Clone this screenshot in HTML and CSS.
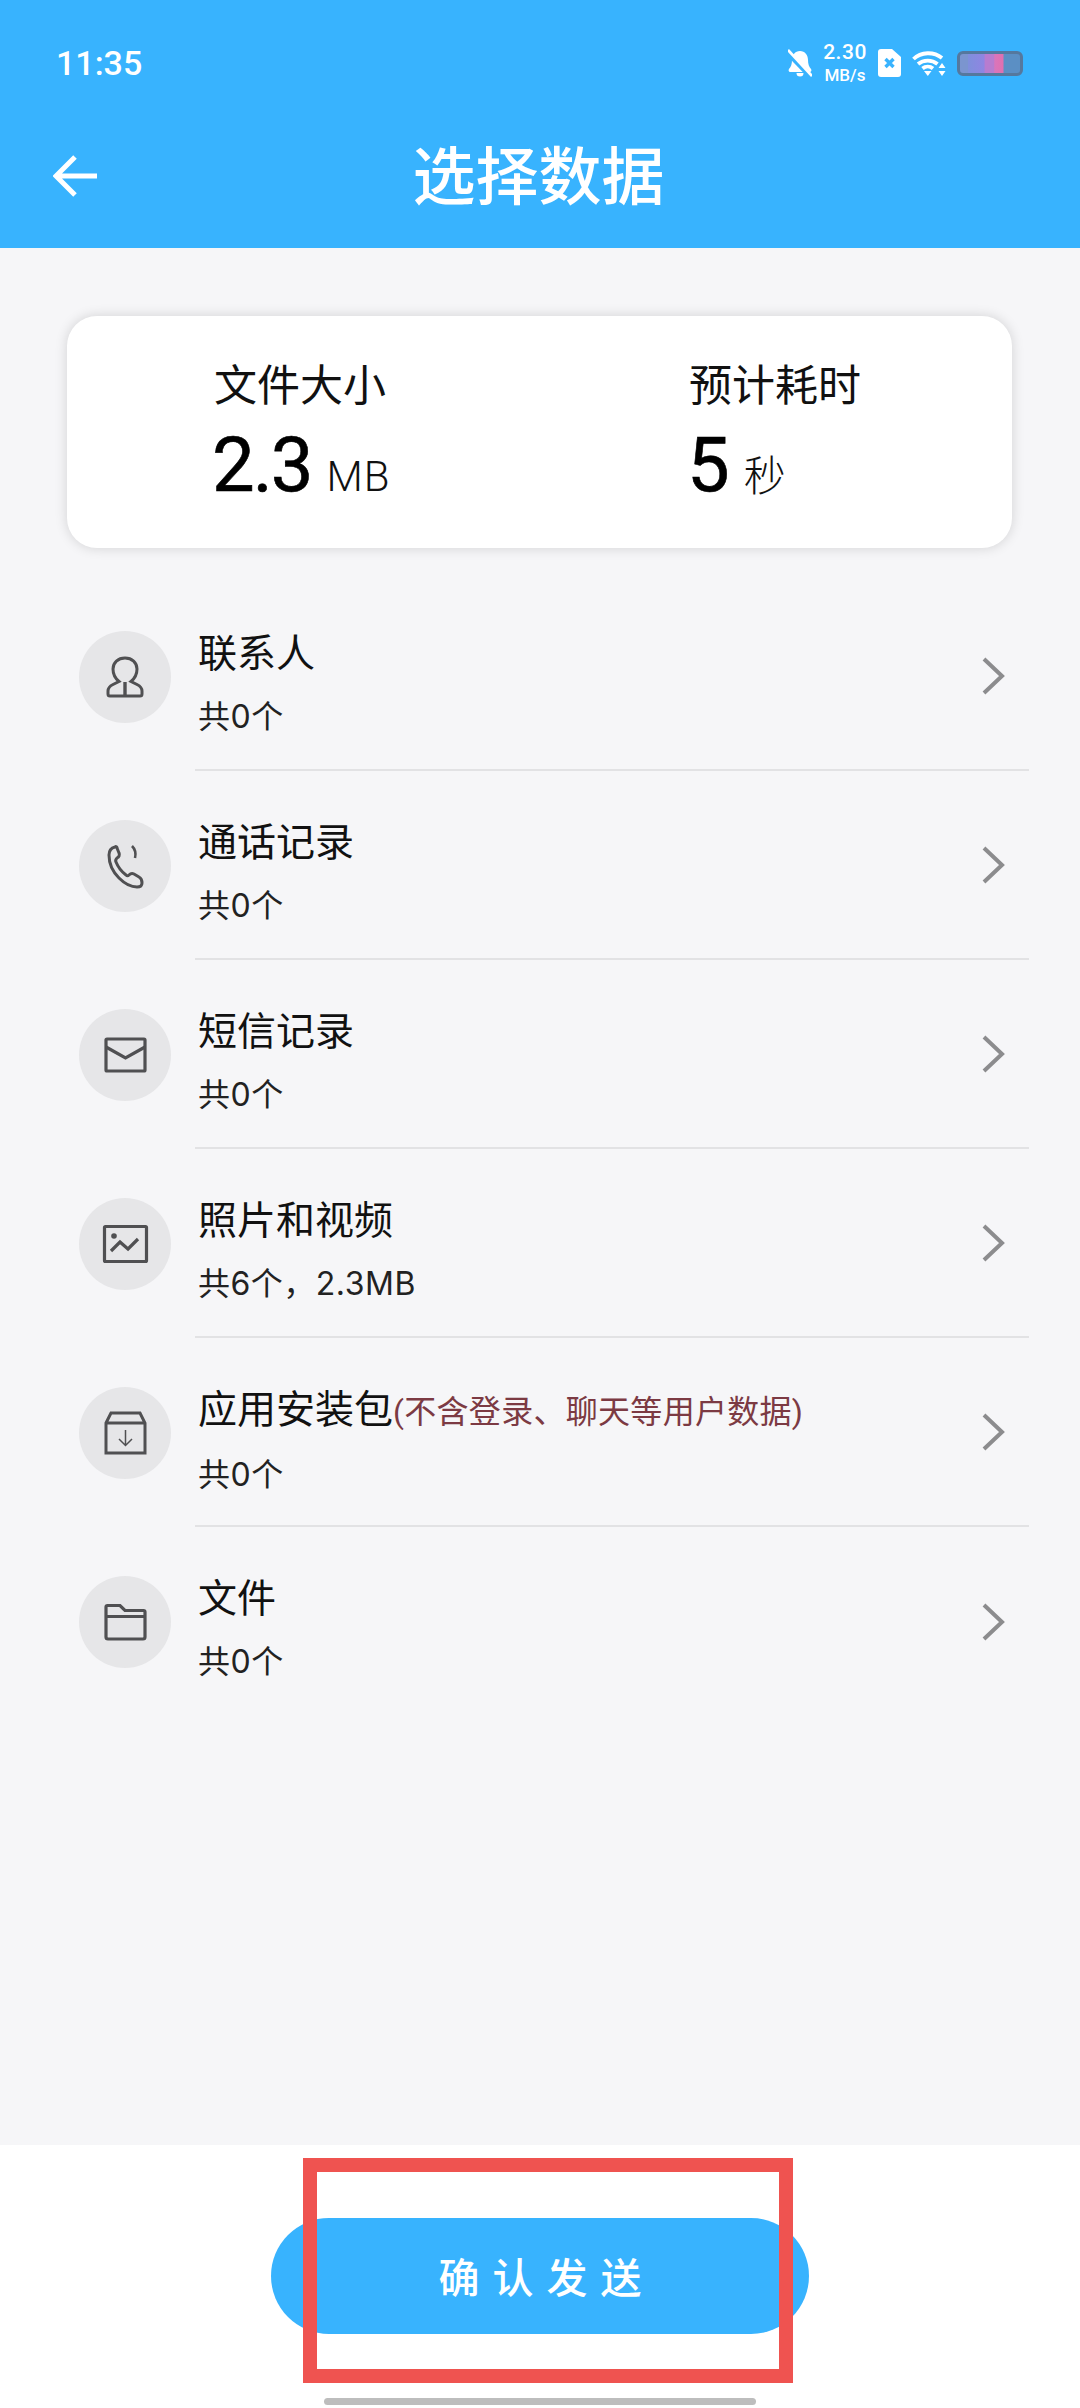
FILE: index.html
```html
<!DOCTYPE html>
<html lang="zh-CN">
<head>
    <meta charset="UTF-8">
    <meta name="viewport" content="width=device-width, initial-scale=1.0">
    <title>选择数据</title>
    <link rel="stylesheet" href="styles.css">
</head>
<body>
    <div class="page">
        <div class="header">
            <div class="status">
                <span class="time">11:35</span>
                <div class="status-icons">
                    <svg class="ic-bell" viewBox="0 0 24 28"><path d="M12 2C7 2 4 6 4 11c0 4-1 7-3 9-1 1 0 3 1 3h20c1 0 2-2 1-3-2-2-3-5-3-9 0-5-3-9-8-9z" fill="#fff"/><path d="M8.500 24h7a3.500 3.500 0 0 1-7 0z" fill="#fff"/><path d="M-1 3l24 25" stroke="#38b3fe" stroke-width="5"/><path d="M0 1l24 26" stroke="#fff" stroke-width="2.600"/></svg>
                    <div class="speed"><span>2.30</span><span class="speed-unit">MB/s</span></div>
                    <svg class="ic-sim" viewBox="0 0 23 28"><path d="M3 0h11l9 8v17a3 3 0 0 1-3 3H3a3 3 0 0 1-3-3V3a3 3 0 0 1 3-3z" fill="#fff"/><path d="M7.500 10l8 8M15.500 10l-8 8" stroke="#38b3fe" stroke-width="3.400"/></svg>
                    <svg class="ic-wifi" viewBox="0 0 34 26"><path d="M1.500 9C9 1.500 22 1.500 30 8M6 14c5.500-4.500 14-4.500 19.500 0M10.500 18.500c3-2.500 7.500-2.500 10.500 0" fill="none" stroke="#fff" stroke-width="3.800"/><path d="M12 21h7.500l-3.700 5z" fill="#fff"/><path d="M30 13l3.500 5h-7zM30 26l3.500-5h-7z" fill="#fff"/></svg>
                    <div class="battery"></div>
                </div>
            </div>
            <div class="nav">
                <svg class="ic-back" viewBox="0 0 44 42"><path d="M22 2L3 21l19 19M3 21h41" fill="none" stroke="#fff" stroke-width="5"/></svg>
                <div class="nav-title">选择数据</div>
            </div>
        </div>

        <div class="main">
            <div class="card">
                <div class="stat">
                    <div class="stat-label">文件大小</div>
                    <div class="stat-value">2.3<span class="stat-unit stat-unit-en">MB</span></div>
                </div>
                <div class="stat">
                    <div class="stat-label">预计耗时</div>
                    <div class="stat-value">5<span class="stat-unit">秒</span></div>
                </div>
            </div>

            <ul class="list">
                <li class="row">
                    <div class="circle">
                        <svg viewBox="0 0 92 92"><path d="M31 65h30a2 2 0 0 0 2-2v-3c0-3-2-5-5-6.500l-6-3c3-2.500 6-7 6-12.500 0-6.500-5-11-12-11s-12 4.500-12 11c0 5.500 3 10 6 12.500l-6 3c-3 1.500-5 3.500-5 6.500v3a2 2 0 0 0 2 2z" fill="none" stroke="#505052" stroke-width="3"/><path d="M46 51v13" stroke="#505052" stroke-width="3.400"/></svg>
                    </div>
                    <div class="row-body">
                        <div class="row-text">
                            <div class="row-title">联系人</div>
                            <div class="row-sub">共0个</div>
                        </div>
                        <svg class="chevron" viewBox="0 0 24 38"><path d="M3 2l18 17L3 36" fill="none" stroke="#8c8c8e" stroke-width="4"/></svg>
                    </div>
                </li>
                <li class="row">
                    <div class="circle">
                        <svg viewBox="0 0 92 92"><path d="M36 27c-4 1-6 4-6 8 0 8 4 17 10 23 5 5 12 9 18 9 3 0 5-1 5-4 0-2-1-5-3-6l-5-3c-2-1-3-1-5 1-1 1-2 1-3 0-4-3-8-8-10-13-1-2 0-3 1-4 2-1 3-3 2-5l-2-5c0-1-1-2-2-1z" fill="none" stroke="#505052" stroke-width="3"/><path d="M53 26c3 3 4 8 3 12" fill="none" stroke="#505052" stroke-width="2.600"/></svg>
                    </div>
                    <div class="row-body">
                        <div class="row-text">
                            <div class="row-title">通话记录</div>
                            <div class="row-sub">共0个</div>
                        </div>
                        <svg class="chevron" viewBox="0 0 24 38"><path d="M3 2l18 17L3 36" fill="none" stroke="#8c8c8e" stroke-width="4"/></svg>
                    </div>
                </li>
                <li class="row">
                    <div class="circle">
                        <svg viewBox="0 0 92 92"><rect x="27" y="30" width="39" height="32" rx="1" fill="none" stroke="#505052" stroke-width="3.200"/><path d="M27 38l19.500 11L66 38" fill="none" stroke="#505052" stroke-width="3.200"/></svg>
                    </div>
                    <div class="row-body">
                        <div class="row-text">
                            <div class="row-title">短信记录</div>
                            <div class="row-sub">共0个</div>
                        </div>
                        <svg class="chevron" viewBox="0 0 24 38"><path d="M3 2l18 17L3 36" fill="none" stroke="#8c8c8e" stroke-width="4"/></svg>
                    </div>
                </li>
                <li class="row">
                    <div class="circle">
                        <svg viewBox="0 0 92 92"><rect x="25.500" y="28.500" width="42" height="35" rx="1" fill="none" stroke="#505052" stroke-width="3.200"/><circle cx="35" cy="38" r="2.800" fill="#505052"/><path d="M32 53l9-9 8 7 10-10" fill="none" stroke="#505052" stroke-width="3.200"/></svg>
                    </div>
                    <div class="row-body">
                        <div class="row-text">
                            <div class="row-title">照片和视频</div>
                            <div class="row-sub">共6个，2.3MB</div>
                        </div>
                        <svg class="chevron" viewBox="0 0 24 38"><path d="M3 2l18 17L3 36" fill="none" stroke="#8c8c8e" stroke-width="4"/></svg>
                    </div>
                </li>
                <li class="row">
                    <div class="circle">
                        <svg viewBox="0 0 92 92"><path d="M27 36l5-10h29l5 10v30H27zM27 36h39" fill="none" stroke="#505052" stroke-width="3"/><path d="M46.500 43v15M40 52l6.500 6.500L53 52" fill="none" stroke="#505052" stroke-width="1.500"/></svg>
                    </div>
                    <div class="row-body">
                        <div class="row-text">
                            <div class="row-title">应用安装包<span class="row-note">(不含登录、聊天等用户数据)</span></div>
                            <div class="row-sub">共0个</div>
                        </div>
                        <svg class="chevron" viewBox="0 0 24 38"><path d="M3 2l18 17L3 36" fill="none" stroke="#8c8c8e" stroke-width="4"/></svg>
                    </div>
                </li>
                <li class="row">
                    <div class="circle">
                        <svg viewBox="0 0 92 92"><path d="M27 31a1.500 1.500 0 0 1 1.500-1.500H41l5 5h18.500A1.500 1.500 0 0 1 66 36v25a2 2 0 0 1-2 2H29a2 2 0 0 1-2-2zM27 40.500h39" fill="none" stroke="#505052" stroke-width="3.200"/></svg>
                    </div>
                    <div class="row-body row-last">
                        <div class="row-text">
                            <div class="row-title">文件</div>
                            <div class="row-sub">共0个</div>
                        </div>
                        <svg class="chevron" viewBox="0 0 24 38"><path d="M3 2l18 17L3 36" fill="none" stroke="#8c8c8e" stroke-width="4"/></svg>
                    </div>
                </li>
            </ul>
        </div>

        <div class="footer">
            <div class="send-btn">确认发送</div>
            <div class="home-bar"></div>
            <!-- 红框 -->
            <div class="mark"></div>
        </div>
    </div>
</body>
</html>
```

FILE: styles.css
```css
*{
    margin: 0;
    padding: 0;
    box-sizing: border-box;
}
ul{
    list-style: none;
}
body{
    font-family: "Roboto", "Noto Sans CJK SC", sans-serif;
    background: #f6f6f8;
}
.page{
    width: 1080px;
    height: 2408px;
    display: flex;
    flex-direction: column;
    overflow: hidden;
}
/* 顶部 */
.header{
    height: 248px;
    background: #38b3fe;
    color: #fff;
}
.status{
    height: 80px;
    padding: 46px 57px 0 56px;
    display: flex;
    justify-content: space-between;
    align-items: center;
}
.time{
    font-size: 34px;
    font-weight: 500;
}
.status-icons{
    display: flex;
    align-items: center;
}
.ic-bell{
    width: 24px;
    height: 28px;
    margin-right: 10px;
    overflow: hidden;
}
.speed{
    width: 46px;
    display: flex;
    flex-direction: column;
    align-items: center;
    font-size: 21px;
    font-weight: 500;
    letter-spacing: 0.5px;
    line-height: 25px;
    margin-right: 10px;
}
.speed-unit{
    font-size: 17px;
    letter-spacing: 0;
    line-height: 21px;
}
.ic-sim{
    width: 23px;
    height: 28px;
    margin-right: 11px;
}
.ic-wifi{
    width: 34px;
    height: 26px;
    margin-right: 11px;
}
.battery{
    width: 66px;
    height: 25px;
    border: 3px solid #55789e;
    border-radius: 6px;
    background: linear-gradient(90deg, #7b95cf 0, #7b95cf 14%, #7f8fdc 14%, #8f85e2 40%, #b77ccf 42%, #b77ccf 56%, #d975ba 58%, #e070b0 72%, #5b8fc4 73%, #5b8fc4 100%);
}
.nav{
    height: 168px;
    padding: 24px 46px 0 53px;
    display: grid;
    grid-template-columns: 1fr auto 1fr;
    align-items: center;
}
.ic-back{
    width: 44px;
    height: 42px;
}
.nav-title{
    font-size: 63px;
    font-weight: 500;
    line-height: 70px;
    margin: 3px 10px 0 0;
}
/* 内容 */
.main{
    flex: 1;
    background: #f6f6f8;
    padding-top: 68px;
}
.card{
    width: 945px;
    height: 232px;
    margin-left: 67px;
    padding: 45px 0 0 147px;
    background: #fff;
    border-radius: 30px;
    box-shadow: 0 0 12px 1px rgba(0,0,0,0.13);
    display: grid;
    grid-template-columns: 475px 1fr;
}
.stat-label{
    font-size: 43px;
    line-height: 50px;
    color: #111;
}
.stat-value{
    font-size: 76px;
    line-height: 76px;
    margin: 16px 0 0 -2px;
    letter-spacing: -2px;
    color: #000;
    -webkit-text-stroke: 0.6px #000;
}
.stat-unit{
    font-size: 42px;
    font-weight: 300;
    letter-spacing: 0;
    margin-left: 16px;
    color: #111;
    -webkit-text-stroke: 0;
}
.stat-unit-en{
    margin-left: 15px;
    letter-spacing: 1px;
}
.list{
    margin: 34px 51px 0 79px;
}
.row{
    height: 189px;
    display: flex;
    align-items: center;
}
.circle{
    width: 92px;
    height: 92px;
    margin-right: 24px;
    border-radius: 50%;
    background: #e6e6e8;
    flex-shrink: 0;
}
.circle svg{
    display: block;
    width: 92px;
    height: 92px;
}
.row-body{
    flex: 1;
    height: 189px;
    padding: 0 24px 0 3px;
    border-bottom: 2px solid #e2e2e4;
    display: flex;
    justify-content: space-between;
    align-items: center;
}
.row-last{
    border-bottom: 0;
}
.row-text{
    align-self: flex-start;
    padding-top: 50px;
}
.row-title{
    font-size: 39px;
    line-height: 44px;
    color: #111;
}
.row-note{
    font-size: 32px;
    letter-spacing: 0.3px;
    color: #7c3a43;
}
.row-sub{
    font-family: "Inter", "Noto Sans CJK SC", sans-serif;
    font-size: 32px;
    letter-spacing: 0.5px;
    line-height: 40px;
    margin-top: 21px;
    color: #222;
}
.chevron{
    width: 24px;
    height: 38px;
}
/* 底部 */
.footer{
    height: 263px;
    background: #fff;
    position: relative;
    padding-top: 73px;
    display: flex;
    flex-direction: column;
    align-items: center;
}
.send-btn{
    width: 538px;
    height: 116px;
    border-radius: 58px;
    background: #38b3fe;
    color: #fff;
    font-size: 41px;
    font-weight: 500;
    letter-spacing: 13px;
    text-indent: 13px;
    line-height: 122px;
    text-align: center;
}
.home-bar{
    width: 432px;
    height: 7px;
    margin-top: 64px;
    border-radius: 4px;
    background: #bdbdbd;
}
.mark{
    position: absolute;
    left: 303px;
    top: 13px;
    width: 490px;
    height: 225px;
    border: 14px solid #ef5350;
}
```
